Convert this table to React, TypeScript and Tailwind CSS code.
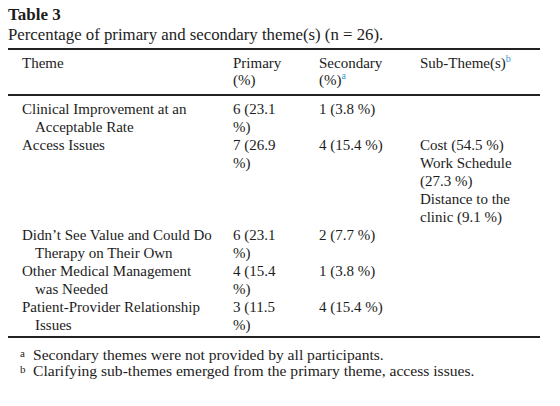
const rows = [
  { theme: "Clinical Improvement at an Acceptable Rate", primary: ["6 (23.1", "%)"], secondary: "1 (3.8 %)", sub: [] as string[] },
  { theme: "Access Issues", primary: ["7 (26.9", "%)"], secondary: "4 (15.4 %)", sub: ["Cost (54.5 %)", "Work Schedule (27.3 %)", "Distance to the clinic (9.1 %)"] },
  { theme: "Didn’t See Value and Could Do Therapy on Their Own", primary: ["6 (23.1", "%)"], secondary: "2 (7.7 %)", sub: [] },
  { theme: "Other Medical Management was Needed", primary: ["4 (15.4", "%)"], secondary: "1 (3.8 %)", sub: [] },
  { theme: "Patient-Provider Relationship Issues", primary: ["3 (11.5", "%)"], secondary: "4 (15.4 %)", sub: [] },
];

function Rule() {
  return <div className="h-[2px] w-[532px] bg-[#222]" />;
}

export default function App() {
  return (
    <div className="w-[560px] h-[406px] bg-white text-[#1c1c1c] font-['Liberation_Serif',serif] pl-2 pt-[5px]">
      <div className="text-[17px] font-bold leading-[20px]">Table 3</div>
      <div className="text-[16.8px] leading-[20px]">Percentage of primary and secondary theme(s) (n = 26).</div>

      <div className="w-[532px] mt-[3px] text-[15px] leading-[18px]">
        <Rule />
        <div className="grid grid-cols-[225px_86px_101px_1fr] pt-[5px] pb-[5px] leading-[17px]">
          <div className="pl-[14px]">Theme</div>
          <div>
            Primary
            <br />
            (%)
          </div>
          <div>
            Secondary
            <br />
            (%)<sup className="text-[#3a9ad0] text-[10px] -top-[6px]">a</sup>
          </div>
          <div>
            Sub-Theme(s)<sup className="text-[#3a9ad0] text-[10px] -top-[6px]">b</sup>
          </div>
        </div>
        <Rule />

        <div className="pt-[4px] pb-[2px]">
          {rows.map((r, i) => (
            <div key={i} className="grid grid-cols-[225px_86px_101px_1fr]">
              <div className="pl-[27px] indent-[-13px] pr-[19px]">{r.theme}</div>
              <div>
                {r.primary[0]}
                <br />
                {r.primary[1]}
              </div>
              <div>{r.secondary}</div>
              <div className="pr-2">
                {r.sub.map((s, j) => (
                  <div key={j}>{s}</div>
                ))}
              </div>
            </div>
          ))}
        </div>
        <Rule />
      </div>

      <div className="mt-[9px] text-[15.6px] leading-[16px]">
        <div className="flex">
          <span className="w-[25px] pl-[12px] text-[11px] leading-[12px]">a</span>
          <span>Secondary themes were not provided by all participants.</span>
        </div>
        <div className="flex">
          <span className="w-[25px] pl-[12px] text-[11px] leading-[12px]">b</span>
          <span>Clarifying sub-themes emerged from the primary theme, access issues.</span>
        </div>
      </div>
    </div>
  );
}
